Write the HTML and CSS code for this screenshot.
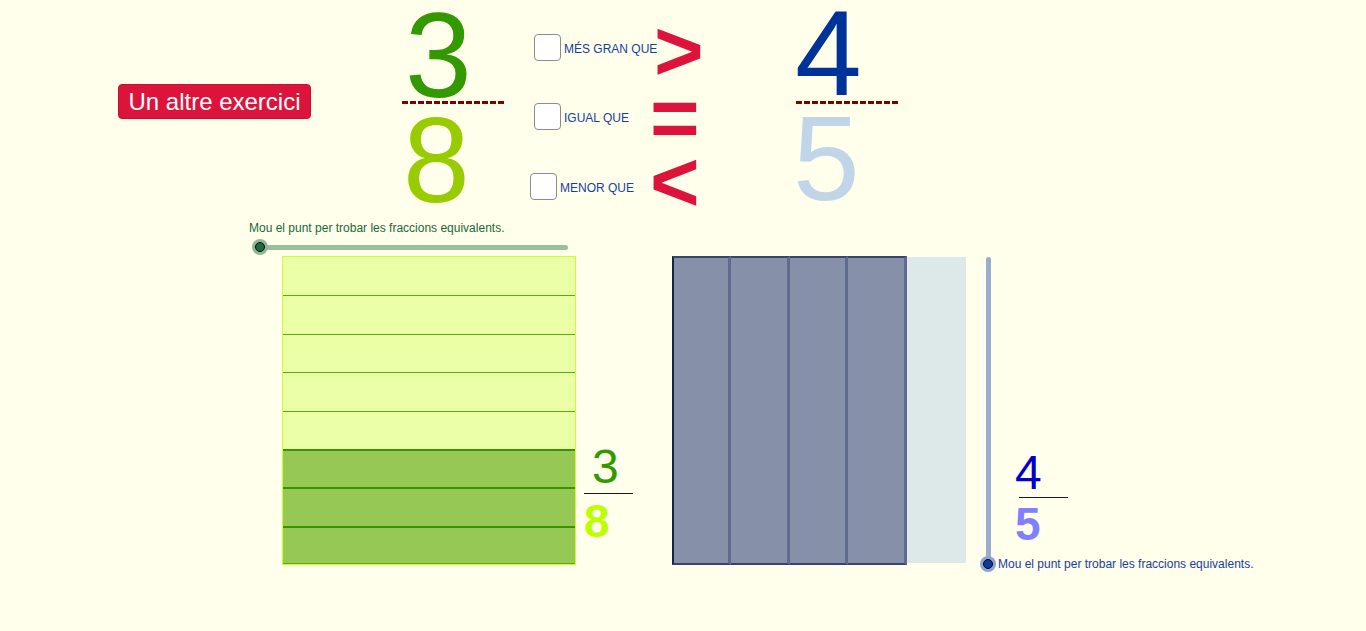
FILE: index.html
```html
<!DOCTYPE html>
<html lang="ca">
<head>
<meta charset="utf-8">
<title>Fraccions</title>
<link rel="stylesheet" href="styles.css">
</head>
<body>
<div class="canvas">
  <div class="btn">Un altre exercici</div>

  <div class="big n3">3</div>
  <div class="dash d1"></div>
  <div class="big n8">8</div>

  <div class="opt o1"><span class="cb"></span><span class="lbl">MÉS GRAN QUE</span></div>
  <div class="opt o2"><span class="cb"></span><span class="lbl">IGUAL QUE</span></div>
  <div class="opt o3"><span class="cb"></span><span class="lbl">MENOR QUE</span></div>

  <div class="sym s-gt">&gt;</div>
  <div class="sym s-eq">=</div>
  <div class="sym s-lt">&lt;</div>

  <div class="big n4">4</div>
  <div class="dash d2"></div>
  <div class="big n5">5</div>

  <div class="cap cap-l">Mou el punt per trobar les fraccions equivalents.</div>
  <div class="track-h"></div>
  <div class="pt pt-g"></div>

  <div class="bar-l">
    <div class="row"></div>
    <div class="row"></div>
    <div class="row"></div>
    <div class="row"></div>
    <div class="row"></div>
    <div class="row on"></div>
    <div class="row on"></div>
    <div class="row on"></div>
  </div>

  <div class="frac fr-l">
    <span class="num">3</span>
    <span class="bar"></span>
    <span class="den">8</span>
  </div>

  <div class="bar-r">
    <div class="col on first"></div>
    <div class="col on"></div>
    <div class="col on"></div>
    <div class="col on"></div>
    <div class="col"></div>
  </div>

  <div class="track-v"></div>
  <div class="pt pt-b"></div>
  <div class="cap cap-r">Mou el punt per trobar les fraccions equivalents.</div>

  <div class="frac fr-r">
    <span class="num">4</span>
    <span class="bar"></span>
    <span class="den">5</span>
  </div>
</div>
</body>
</html>
```
FILE: styles.css
```css
html, body {
  margin: 0;
  padding: 0;
  background: #ffffeb;
}
body {
  font-family: "Liberation Sans", Arial, sans-serif;
  overflow: hidden;
}
.canvas {
  position: relative;
  width: 1366px;
  height: 631px;
  background: #ffffeb;
}
.canvas > * {
  position: absolute;
}

.btn {
  left: 118px;
  top: 84px;
  width: 193px;
  height: 35px;
  box-sizing: border-box;
  background: #dc143c;
  border: 1px solid #c8102f;
  border-radius: 4px;
  color: #fff;
  font-size: 24px;
  line-height: 1;
  display: flex;
  align-items: center;
  justify-content: center;
}

.big {
  font-size: 120px;
  line-height: 90px;
}
.n3 { left: 405px; top: 10px; color: #339900; }
.n8 { left: 403px; top: 115px; color: #99cc00; }
.n4 { left: 795px; top: 8px; color: #003399; }
.n5 { left: 793px; top: 113px; color: #c0d5e8; }

.dash {
  height: 3px;
  width: 104px;
  background: repeating-linear-gradient(to right, #800000 0, #800000 6px, transparent 6px, transparent 8px);
}
.d1 { left: 402px; top: 101px; }
.d2 { left: 796px; top: 101px; }

.opt {
  display: flex;
  align-items: center;
  gap: 3px;
}
.cb {
  width: 27px;
  height: 27px;
  box-sizing: border-box;
  border: 1.5px solid #8c8c8c;
  border-radius: 4px;
  background: #fff;
}
.lbl {
  color: #133f9e;
  font-size: 12px;
  line-height: 12px;
  padding-top: 2px;
  white-space: nowrap;
}
.o1 { left: 534px; top: 34px; }
.o2 { left: 534px; top: 103px; }
.o3 { left: 530px; top: 173px; }

.sym {
  color: #dc143c;
  font-weight: bold;
  font-size: 85px;
  line-height: 50px;
}
.s-gt { left: 654px; top: 26px; }
.s-eq { left: 650px; top: 93px; }
.s-lt { left: 650px; top: 157px; }

.cap {
  font-size: 12px;
  line-height: 12px;
  white-space: nowrap;
}
.cap-l { left: 249px; top: 222px; color: #19683a; }
.cap-r { left: 998px; top: 558px; color: #1a3d99; }

.track-h {
  left: 258px;
  top: 245px;
  width: 310px;
  height: 5px;
  border-radius: 3px;
  background: #99bf9f;
}
.track-v {
  left: 986px;
  top: 257px;
  width: 5px;
  height: 308px;
  border-radius: 3px;
  background: #9aadcc;
}
.pt {
  width: 10px;
  height: 10px;
  box-sizing: border-box;
  border-radius: 50%;
  border: 1px solid #000;
}
.pt-g {
  left: 255px;
  top: 242px;
  background: #1b6b43;
  box-shadow: 0 0 0 3px #8fb89a;
}
.pt-b {
  left: 983px;
  top: 559px;
  background: #0b3b9c;
  box-shadow: 0 0 0 3px #8ea4d4;
}

.bar-l {
  left: 282px;
  top: 256px;
  width: 294px;
  height: 309px;
  box-sizing: border-box;
  border: 1.5px solid #ccff33;
  background: #ebffa7;
  display: grid;
  grid-template-rows: repeat(8, 1fr);
}
.bar-l .row + .row {
  border-top: 1px solid #5aab0c;
}
.bar-l .row.on {
  background: #96c856;
  border-top: 2px solid #3a9600;
}
.bar-l .row.on:last-child {
  border-bottom: 1px solid #66aa00;
}

.bar-r {
  left: 672px;
  top: 256px;
  width: 294px;
  height: 309px;
  display: grid;
  grid-template-columns: repeat(5, 1fr);
}
.bar-r .col {
  background: #dde9e8;
  margin: 1px 0 2px 0;
}
.bar-r .col.on {
  margin: 0;
  box-sizing: border-box;
  background: #8690a8;
  border-top: 2px solid #3a4270;
  border-bottom: 2px solid #3a4270;
  border-right: 3px solid #5e6a8e;
}
.bar-r .col.first {
  border-left: 2px solid #1c2045;
}

.frac {
  display: flex;
  flex-direction: column;
}
.frac .num {
  font-size: 48px;
  line-height: 48px;
}
.frac .den {
  font-size: 46px;
  line-height: 46px;
  font-weight: bold;
}
.frac .bar {
  height: 1px;
  background: #1a1a1a;
}
.fr-l { left: 584px; top: 443px; }
.fr-l .num { color: #339900; margin-left: 8px; }
.fr-l .bar { width: 49px; margin-top: 2px; }
.fr-l .den { color: #bbff00; margin-top: 4px; }

.fr-r { left: 1015px; top: 449px; }
.fr-r .num { color: #0000cc; }
.fr-r .bar { width: 49px; margin-left: 4px; margin-top: 0px; }
.fr-r .den { color: #7f7fff; margin-top: 3px; }
```
